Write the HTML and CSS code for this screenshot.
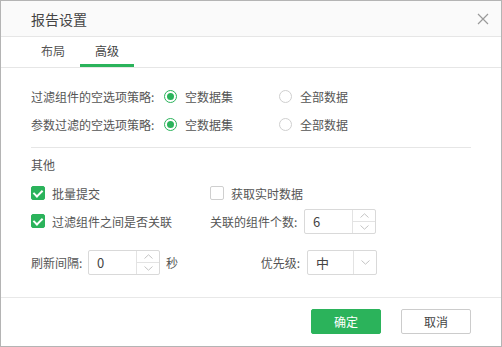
FILE: index.html
```html
<!DOCTYPE html>
<html lang="zh-CN">
<head>
    <meta charset="UTF-8">
    <title>报告设置</title>
    <link rel="stylesheet" href="styles.css">
</head>
<body>
    <div class="dialog">
        <div class="dialog-header">
            <span class="dialog-title">报告设置</span>
            <svg class="close" width="12" height="12" viewBox="0 0 12 12">
                <path d="M1 1 L11 11 M11 1 L1 11" stroke="#9a9a9a" stroke-width="1.2" fill="none"/>
            </svg>
        </div>
        <div class="tabs">
            <div class="tab">布局</div>
            <div class="tab active">高级</div>
        </div>
        <div class="dialog-body">
            <div class="row">
                <span class="row-label">过滤组件的空选项策略:</span>
                <label class="radio-item"><span class="radio checked"></span>空数据集</label>
                <label class="radio-item"><span class="radio"></span>全部数据</label>
            </div>
            <div class="row">
                <span class="row-label">参数过滤的空选项策略:</span>
                <label class="radio-item"><span class="radio checked"></span>空数据集</label>
                <label class="radio-item"><span class="radio"></span>全部数据</label>
            </div>
            <div class="divider"></div>
            <div class="section-title">其他</div>
            <div class="row first-check">
                <label class="col"><span class="checkbox checked"></span>批量提交</label>
                <label class="col"><span class="checkbox"></span>获取实时数据</label>
            </div>
            <div class="row">
                <label class="col"><span class="checkbox checked"></span>过滤组件之间是否关联</label>
                <div class="col">
                    <span class="field-label wide">关联的组件个数:</span>
                    <div class="spin-input">
                        <span class="value">6</span>
                        <div class="spin">
                            <span class="spin-btn"><svg width="9" height="5" viewBox="0 0 9 5"><path d="M0.5 4.5 L4.5 0.8 L8.5 4.5" stroke="#c4c4c4" fill="none"/></svg></span>
                            <span class="spin-btn"><svg width="9" height="5" viewBox="0 0 9 5"><path d="M0.5 0.5 L4.5 4.2 L8.5 0.5" stroke="#c4c4c4" fill="none"/></svg></span>
                        </div>
                    </div>
                </div>
            </div>
            <div class="row last-row">
                <div class="col">
                    <span class="field-label short">刷新间隔:</span>
                    <div class="spin-input">
                        <span class="value">0</span>
                        <div class="spin">
                            <span class="spin-btn"><svg width="9" height="5" viewBox="0 0 9 5"><path d="M0.5 4.5 L4.5 0.8 L8.5 4.5" stroke="#c4c4c4" fill="none"/></svg></span>
                            <span class="spin-btn"><svg width="9" height="5" viewBox="0 0 9 5"><path d="M0.5 0.5 L4.5 4.2 L8.5 0.5" stroke="#c4c4c4" fill="none"/></svg></span>
                        </div>
                    </div>
                    <span class="unit">秒</span>
                </div>
                <div class="col">
                    <span class="field-label right">优先级:</span>
                    <div class="select">
                        <span class="value">中</span>
                        <span class="arrow"><svg width="9" height="5" viewBox="0 0 9 5"><path d="M0.5 0.5 L4.5 4.2 L8.5 0.5" stroke="#c4c4c4" fill="none"/></svg></span>
                    </div>
                </div>
            </div>
        </div>
        <div class="dialog-footer">
            <button type="button" class="btn btn-primary">确定</button>
            <button type="button" class="btn">取消</button>
        </div>
    </div>
</body>
</html>
```
FILE: styles.css
```css
body {
    margin: 0;
    padding: 0;
    font-family: "Noto Sans CJK SC", "Liberation Sans", sans-serif;
    font-size: 12px;
    color: #555;
    background-color: #fff;
}

.dialog {
    width: 502px;
    height: 347px;
    box-sizing: border-box;
    border: 1px solid #b4b4b4;
    display: flex;
    flex-direction: column;
    background-color: #fff;
}

.dialog-header {
    height: 35px;
    background-color: #fafafa;
    border-bottom: 1px solid #e6e6e6;
    display: flex;
    align-items: center;
    justify-content: space-between;
    padding: 0 12px 0 30px;
}

.dialog-title {
    font-size: 14px;
    color: #444;
}

.tabs {
    display: flex;
    padding-left: 25px;
    border-bottom: 1px solid #e6e6e6;
}

    .tabs .tab {
        padding: 0 15px;
        height: 27px;
        line-height: 27px;
        border-bottom: 3px solid transparent;
    }

    .tabs .active {
        border-bottom-color: #2bb35b;
        color: #444;
    }

.dialog-body {
    flex: 1;
    padding: 14px 30px 0 30px;
}

.row {
    display: flex;
    align-items: center;
    height: 28px;
}

.row-label {
    width: 133px;
}

.radio-item {
    width: 115px;
    display: flex;
    align-items: center;
}

.radio {
    width: 11px;
    height: 11px;
    border: 1px solid #cfcfcf;
    border-radius: 50%;
    margin-right: 8px;
    position: relative;
}

    .radio.checked {
        border-color: #2bb35b;
    }

        .radio.checked::after {
            content: "";
            position: absolute;
            left: 2px;
            top: 2px;
            width: 7px;
            height: 7px;
            border-radius: 50%;
            background-color: #2bb35b;
        }

.divider {
    height: 1px;
    background-color: #e6e6e6;
    margin-top: 9px;
}

.section-title {
    margin-top: 7px;
    height: 20px;
    line-height: 20px;
}

.first-check {
    margin-top: 4px;
}

.col {
    width: 179px;
    display: flex;
    align-items: center;
}

.checkbox {
    width: 12px;
    height: 12px;
    border: 1px solid #cfcfcf;
    border-radius: 2px;
    margin-right: 7px;
    position: relative;
}

    .checkbox.checked {
        background-color: #2bb35b;
        border-color: #2bb35b;
    }

        .checkbox.checked::after {
            content: "";
            position: absolute;
            left: 3px;
            top: 1px;
            width: 4px;
            height: 7px;
            border-right: 2px solid #fff;
            border-bottom: 2px solid #fff;
            transform: rotate(45deg);
        }

.field-label.wide {
    width: 94px;
}

.field-label.short {
    width: 57px;
}

.field-label.right {
    width: 97px;
    padding-right: 7px;
    box-sizing: border-box;
    text-align: right;
}

.spin-input,
.select {
    height: 25px;
    box-sizing: border-box;
    border: 1px solid #d9d9d9;
    border-radius: 2px;
    display: flex;
    background-color: #fff;
}

.spin-input {
    width: 72px;
}

.select {
    width: 70px;
}

    .spin-input .value,
    .select .value {
        flex: 1;
        padding-left: 8px;
        line-height: 23px;
        color: #444;
        font-size: 13px;
    }

.spin {
    width: 22px;
    border-left: 1px solid #e3e3e3;
    display: flex;
    flex-direction: column;
}

.spin-btn {
    flex: 1;
    display: flex;
    align-items: center;
    justify-content: center;
}

    .spin-btn + .spin-btn {
        border-top: 1px solid #e3e3e3;
    }

.select .arrow {
    width: 22px;
    border-left: 1px solid #e3e3e3;
    display: flex;
    align-items: center;
    justify-content: center;
}

.unit {
    margin-left: 6px;
}

.last-row {
    margin-top: 13px;
    height: 29px;
}

.dialog-footer {
    height: 49px;
    border-top: 1px solid #e8e8e8;
    display: flex;
    justify-content: flex-end;
    align-items: flex-start;
    gap: 20px;
    padding: 11px 30px 0 0;
    box-sizing: border-box;
}

.btn {
    width: 70px;
    height: 25px;
    font-family: inherit;
    font-size: 12px;
    border: 1px solid #cccccc;
    border-radius: 2px;
    background-color: #fff;
    color: #444;
    padding: 0;
}

.btn-primary {
    background-color: #2bb35b;
    border-color: #2bb35b;
    color: #fff;
}
```
